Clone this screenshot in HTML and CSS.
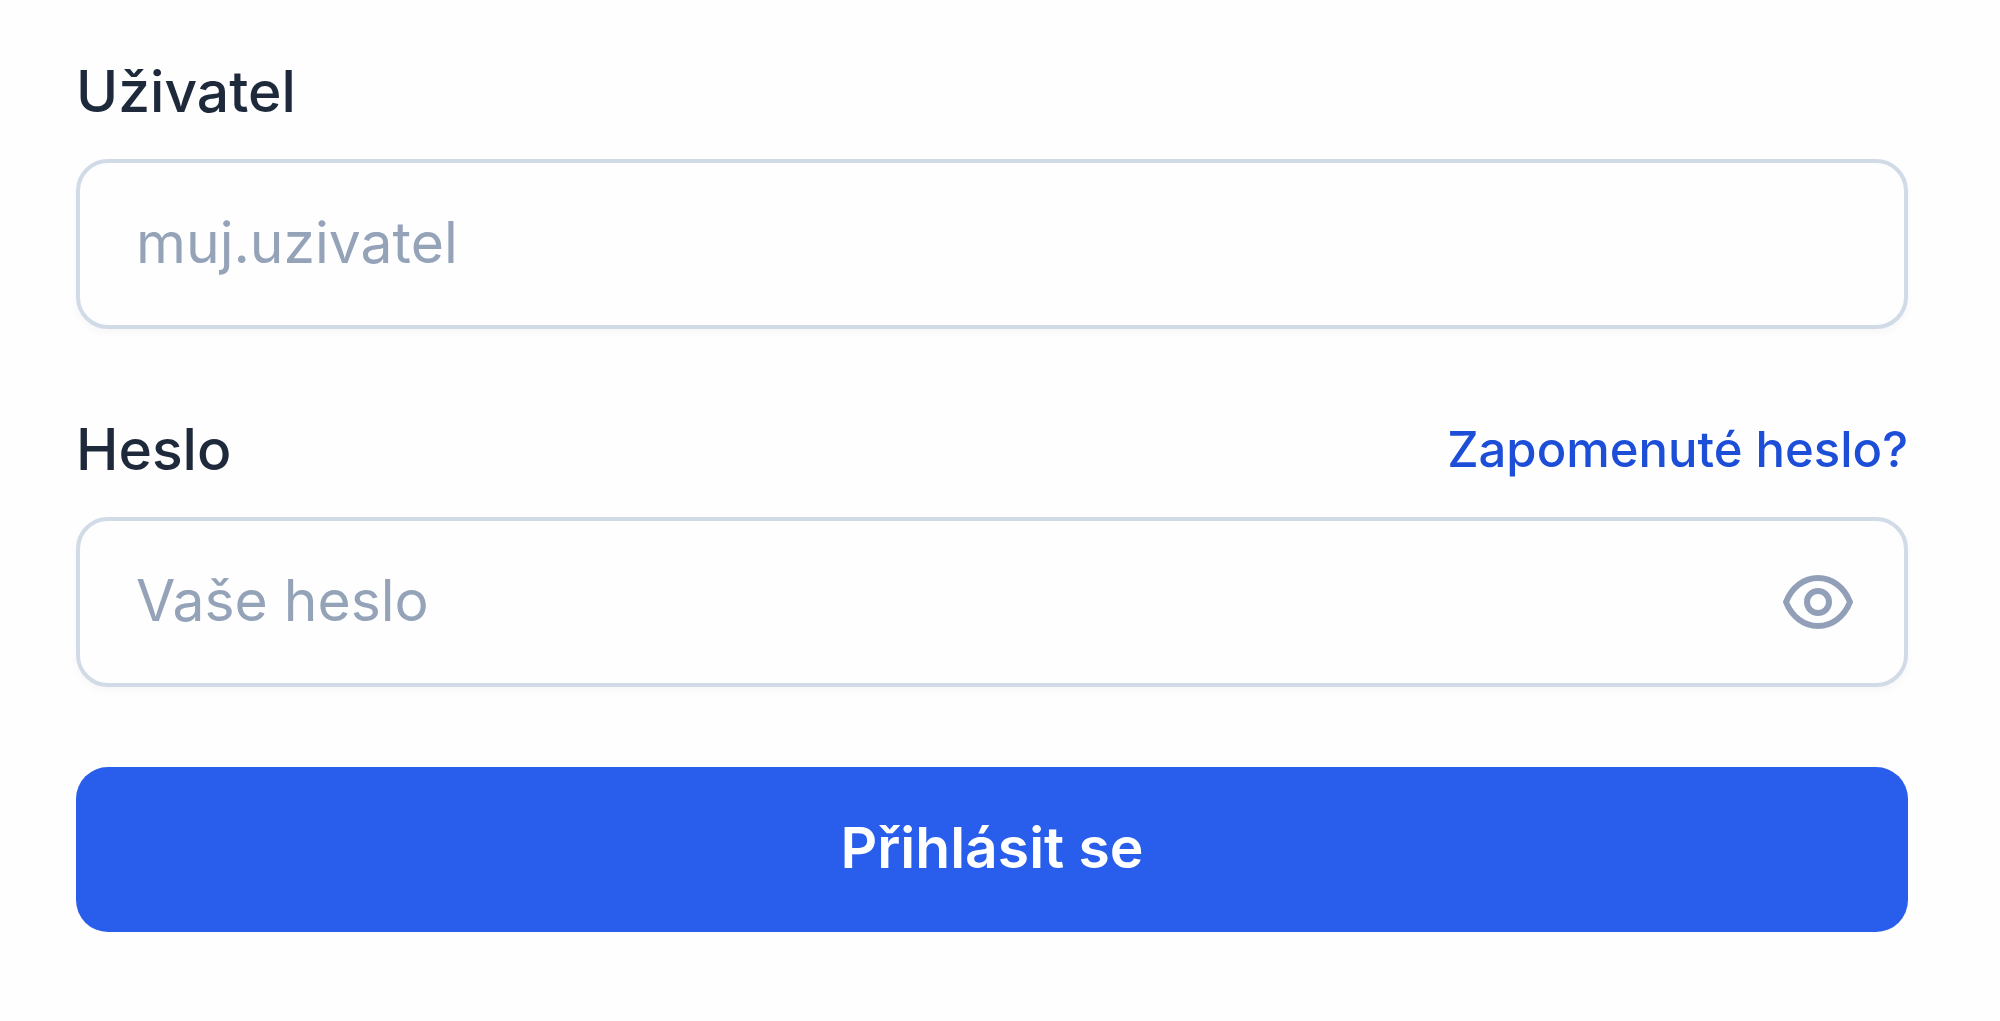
FILE: index.html
```html
<!DOCTYPE html>
<html lang="cs">

<head>
    <meta charset="UTF-8">
    <meta name="viewport" content="width=device-width, initial-scale=1.0">
    <title>Přihlášení</title>
    <link rel="stylesheet" href="styles.css">
</head>

<body>
    <form class="login-form">
        <div class="field">
            <div class="field-header">
                <label for="username">Uživatel</label>
            </div>
            <input class="text-input" type="text" id="username" name="username" placeholder="muj.uzivatel" autocomplete="username">
        </div>

        <div class="field">
            <div class="field-header">
                <label for="password">Heslo</label>
                <a class="forgot-link" href="#">Zapomenuté heslo?</a>
            </div>
            <div class="password-wrapper">
                <input class="text-input" type="password" id="password" name="password" placeholder="Vaše heslo" autocomplete="current-password">
                <button class="toggle-password" type="button" aria-label="Zobrazit heslo">
                    <svg viewBox="0 0 72 56" fill="none" stroke="currentColor" stroke-width="6" stroke-linecap="round" stroke-linejoin="round">
                        <path d="M4 28C10 13 22 4 36 4S62 13 68 28C62 43 50 52 36 52S10 43 4 28Z" />
                        <circle cx="36" cy="28" r="11" />
                    </svg>
                </button>
            </div>
        </div>

        <button class="submit-button" type="submit">Přihlásit se</button>
    </form>
</body>

</html>
```

FILE: styles.css
```css
* {
    box-sizing: border-box;
}

body {
    margin: 0;
    background: #fefefe;
    font-family: Inter, "Liberation Sans", sans-serif;
    color: #1e293b;
}

.login-form {
    display: flex;
    flex-direction: column;
    gap: 80px;
    padding: 51px 92px 89px 76px;
}

.field {
    display: flex;
    flex-direction: column;
    gap: 24px;
}

.field-header {
    display: flex;
    justify-content: space-between;
    align-items: center;
    height: 84px;
    padding-bottom: 4px;
}

.field-header label {
    font-size: 57px;
    font-weight: 500;
}

.forgot-link {
    color: #1d4ed8;
    font-size: 49px;
    font-weight: 500;
    text-decoration: none;
}

.text-input {
    display: block;
    width: 100%;
    height: 170px;
    padding: 0 56px 4px;
    border: 4px solid #d1dbe7;
    border-radius: 32px;
    background: #fefefe;
    box-shadow: 0 4px 8px rgba(0, 0, 0, 0.03);
    font-family: inherit;
    font-size: 57px;
    color: inherit;
}

.text-input::placeholder {
    color: #94a3b8;
    opacity: 1;
}

.password-wrapper {
    position: relative;
}

.password-wrapper .text-input {
    padding-right: 160px;
}

.toggle-password {
    position: absolute;
    top: 0;
    right: 54px;
    display: flex;
    align-items: center;
    height: 100%;
    padding: 0;
    border: none;
    background: none;
    color: #91a0b8;
    cursor: pointer;
}

.toggle-password svg {
    width: 72px;
    height: 56px;
}

.submit-button {
    height: 165px;
    padding: 0 56px 4px;
    border: none;
    border-radius: 32px;
    background: #295eec;
    color: #ffffff;
    font-family: inherit;
    font-size: 57px;
    font-weight: 600;
    cursor: pointer;
}
```
